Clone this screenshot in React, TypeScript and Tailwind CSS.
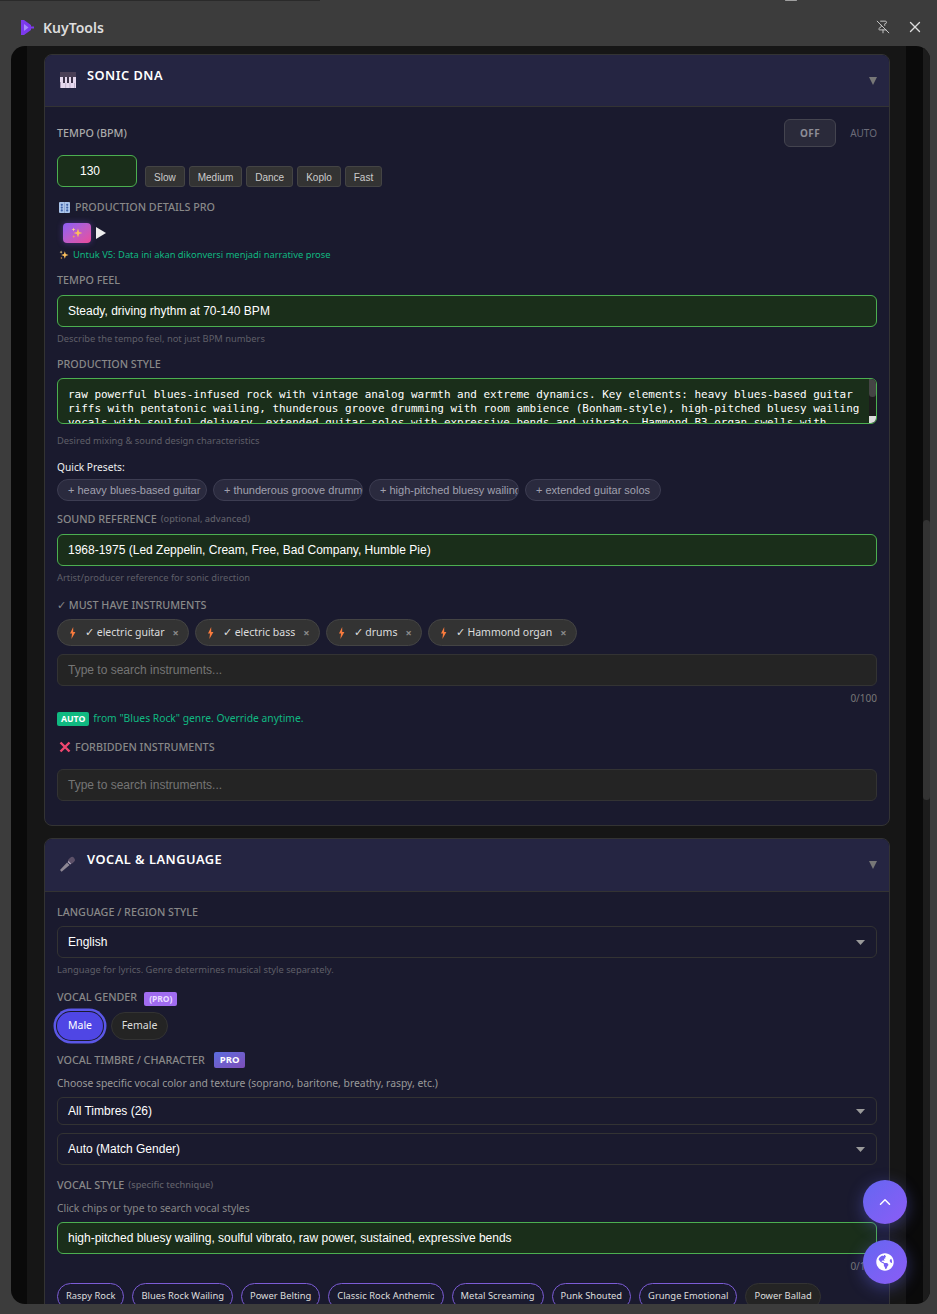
import type { ReactNode } from 'react'
import { PinOff, X, ChevronUp } from 'lucide-react'
import { FaGlobeAmericas } from 'react-icons/fa'

const presets = ['Slow', 'Medium', 'Dance', 'Koplo', 'Fast']
const quickPresets = [
  '+ heavy blues-based guitar',
  '+ thunderous groove drumming',
  '+ high-pitched bluesy wailing',
  '+ extended guitar solos',
]
const instruments = ['✓ electric guitar', '✓ electric bass', '✓ drums', '✓ Hammond organ']
const vocalStyles = [
  { name: 'Raspy Rock', on: true },
  { name: 'Blues Rock Wailing', on: true },
  { name: 'Power Belting', on: true },
  { name: 'Classic Rock Anthemic', on: true },
  { name: 'Metal Screaming', on: true },
  { name: 'Punk Shouted', on: true },
  { name: 'Grunge Emotional', on: true },
  { name: 'Power Ballad', on: false },
]

const productionStyle =
  'raw powerful blues-infused rock with vintage analog warmth and extreme dynamics. Key elements: heavy blues-based guitar riffs with pentatonic wailing, thunderous groove drumming with room ambience (Bonham-style), high-pitched bluesy wailing vocals with soulful delivery, extended guitar solos with expressive bends and vibrato, Hammond B3 organ swells with'

function Label({ children, className = '' }: { children: ReactNode; className?: string }) {
  return (
    <div className={`flex h-4 items-center text-[10.75px] font-medium uppercase text-[#888] ${className}`}>
      {children}
    </div>
  )
}

function Help({ children, className = '' }: { children: ReactNode; className?: string }) {
  return <div className={`mt-[5px] h-[14px] text-[9.35px] leading-[14px] text-[#5f5f68] ${className}`}>{children}</div>
}

function FilledInput({ value, className = '' }: { value: string; className?: string }) {
  return (
    <div
      className={`flex h-8 items-center rounded-md border border-[#4caf50] bg-[#1a2e1a] px-[10px] font-['Liberation_Sans',sans-serif] text-[12px] text-white ${className}`}
    >
      {value}
    </div>
  )
}

function SearchInput({ className = '' }: { className?: string }) {
  return (
    <div
      className={`flex h-8 items-center rounded-md border border-[#333] bg-[#242424] px-[10px] font-['Liberation_Sans',sans-serif] text-[12px] text-[#757575] ${className}`}
    >
      Type to search instruments...
    </div>
  )
}

function SelectBox({ value, className = '' }: { value: string; className?: string }) {
  return (
    <div
      className={`flex items-center justify-between rounded-md border border-[#333] bg-[#1a1a2e] pl-[10px] pr-[11px] font-['Liberation_Sans',sans-serif] text-[12px] text-white ${className}`}
    >
      {value}
      <svg width="9" height="5" viewBox="0 0 9 5">
        <path d="M0 0h9L4.5 5z" fill="#9a9a9a" />
      </svg>
    </div>
  )
}

function PanelHeader({ icon, title, className = '' }: { icon: ReactNode; title: string; className?: string }) {
  return (
    <div className={`flex items-start border-b border-[#333] bg-[#252542] ${className}`}>
      <div className="ml-[15px] mt-[17px] h-4 w-4">{icon}</div>
      <div className="ml-[11px] mt-[11px] text-[12.8px] font-semibold leading-[18px] tracking-[0.5px] text-white">{title}</div>
      <svg className="ml-auto mr-3 mt-[22px]" width="8" height="8" viewBox="0 0 8 8">
        <path d="M0 0h8L4 8z" fill="#777" />
      </svg>
    </div>
  )
}

function Panel({ children, className = '' }: { children: ReactNode; className?: string }) {
  return <div className={`overflow-hidden rounded-lg border border-[#333] bg-[#1a1a2e] ${className}`}>{children}</div>
}

function PianoIcon() {
  return (
    <svg width="16" height="16" viewBox="0 0 16 16">
      <rect y="0" width="16" height="5" fill="#4a3f56" />
      <rect y="5" width="16" height="11" fill="#e6d8ee" />
      <path d="M3 5h2v6H3zM7 5h2v6H7zM11 5h2v6h-2z" fill="#3b3247" />
      <path d="M0 10h1v6H0zM5.5 11h.6v5h-.6zM9.7 11h.6v5h-.6zM14 11h.6v5H14z" fill="#a99ab6" />
    </svg>
  )
}

function MicIcon() {
  return (
    <svg width="16" height="16" viewBox="0 0 16 16">
      <path d="M0 14l1.6 1.8L9.6 9 7 6.4z" fill="#8d8794" />
      <rect x="8" y="1.6" width="7" height="5.6" rx="2.4" transform="rotate(-40 11.5 4.4)" fill="#5c5068" />
      <path d="M7.6 6l2.6 2.6 1-.9L8.5 5z" fill="#b3aabd" />
    </svg>
  )
}

function KnobsIcon() {
  return (
    <svg width="11" height="11" viewBox="0 0 11 11">
      <rect width="11" height="11" rx="1" fill="#a9c4ea" />
      <path d="M5.2 0h.6v11h-.6z" fill="#7e93c0" />
      <circle cx="2.8" cy="2.8" r="1.1" fill="#3f62a8" />
      <circle cx="8.2" cy="2.8" r="1.1" fill="#3f62a8" />
      <circle cx="2.8" cy="5.6" r="1.1" fill="#3f62a8" />
      <circle cx="8.2" cy="5.6" r="1.1" fill="#3f62a8" />
      <circle cx="2.8" cy="8.4" r="1.1" fill="#3f62a8" />
      <circle cx="8.2" cy="8.4" r="1.1" fill="#3f62a8" />
    </svg>
  )
}

function SparkleIcon({ size = 11 }: { size?: number }) {
  return (
    <svg width={size} height={size} viewBox="0 0 12 12">
      <path d="M7 1.5l1.1 3.4L11.5 6 8.1 7.1 7 10.5 5.9 7.1 2.5 6l3.4-1.1z" fill="#fbbf5c" />
      <path d="M2.5 0.5l.5 1.5 1.5.5-1.5.5-.5 1.5-.5-1.5L.5 2.5 2 2z" fill="#fcd98a" />
      <path d="M2.8 8l.4 1.2 1.2.4-1.2.4-.4 1.2-.4-1.2-1.2-.4 1.2-.4z" fill="#f6a94b" />
    </svg>
  )
}

function BoltIcon() {
  return (
    <svg width="7" height="12" viewBox="0 0 7 12">
      <path d="M4.2 0L1 6.4h2L2.4 12 6.4 5H4.2z" fill="#f97b3d" />
    </svg>
  )
}

function RedCross() {
  return (
    <svg width="12" height="12" viewBox="0 0 12 12">
      <path d="M1.5 1.5l9 9M10.5 1.5l-9 9" stroke="#f0476f" strokeWidth="2.4" />
    </svg>
  )
}

function LogoIcon() {
  return (
    <svg width="13" height="15" viewBox="0 0 13 15">
      <path d="M0 0h3l7 5v1.5h3v2h-3V10l-7 5H0z" fill="#7c3aed" />
      <path d="M3 4l4.5 3.5L3 11z" fill="#a78bfa" />
    </svg>
  )
}

function SonicDna() {
  return (
    <Panel>
      <PanelHeader className="h-[52px]" icon={<PianoIcon />} title="SONIC DNA" />
      <div className="px-3 pb-6 pt-3">
        <div className="flex h-7 items-center">
          <Label className="text-[#aaa]">Tempo (BPM)</Label>
          <div className="ml-auto flex h-7 w-[52px] items-center justify-center rounded-md border border-[#44444f] bg-[#2a2a3a] text-[10px] font-bold tracking-[0.5px] text-[#8d8d96]">
            OFF
          </div>
          <span className="ml-[14px] text-[10px] text-[#6b6b78]">AUTO</span>
        </div>

        <div className="mt-2 flex h-8 items-end">
          <div className="flex h-8 w-20 items-center rounded-md border border-[#4caf50] bg-[#1a2e1a] pl-[22px] font-['Liberation_Sans',sans-serif] text-[12px] text-white">
            130
          </div>
          <div className="ml-2 flex gap-1 font-['Liberation_Sans',sans-serif]">
            {presets.map((p) => (
              <div
                key={p}
                className="flex h-[21px] items-center rounded-[3px] border border-[#444] bg-[#333] px-2 pt-px text-[10px] text-[#ccc]"
              >
                {p}
              </div>
            ))}
          </div>
        </div>

        <Label className="mt-3 gap-[5px] pl-[2px] text-[#6f6f78]">
          <KnobsIcon />
          Production Details Pro
        </Label>

        <div className="mt-2 flex h-5 items-center pl-[6px]">
          <div className="flex h-5 w-7 items-center justify-center rounded-[4px] bg-gradient-to-br from-[#8b5cf6] to-[#ec4899] shadow-[0_0_6px_rgba(139,92,246,0.4)]">
            <SparkleIcon size={12} />
          </div>
          <svg className="ml-[5px]" width="10" height="12" viewBox="0 0 10 12">
            <path d="M0 0l10 6-10 6z" fill="#eee" />
          </svg>
        </div>

        <div className="mt-[5px] flex h-[14px] items-center gap-[4px] pl-[2px] text-[9.35px] text-[#10b981]">
          <SparkleIcon size={10} />
          Untuk V5: Data ini akan dikonversi menjadi narrative prose
        </div>

        <Label className="mt-[10px]">Tempo Feel</Label>
        <FilledInput className="mt-[7px]" value="Steady, driving rhythm at 70-140 BPM" />
        <Help>Describe the tempo feel, not just BPM numbers</Help>

        <Label className="mt-[10px]">Production Style</Label>
        <div className="mt-[6px] flex h-[46px] overflow-hidden rounded-md border border-[#4caf50] bg-[#1a2e1a]">
          <div className="w-[805px] pl-[10px] pt-[9px] font-['DejaVu_Sans_Mono',monospace] text-[10.96px] leading-[14px] text-white">
            {productionStyle}
          </div>
          <div className="ml-auto flex w-[7px] flex-col bg-[#1c1c1c]">
            <div className="h-[18px] rounded-b-sm bg-[#444]" />
            <div className="mt-auto h-[7px] w-[7px] bg-[#ddd]" />
          </div>
        </div>
        <Help className="mt-[10px]">Desired mixing &amp; sound design characteristics</Help>

        <div className="mt-3 h-[14px] text-[10.2px] leading-[14px] text-[#eee]">Quick Presets:</div>
        <div className="mt-[5px] flex gap-[6px] font-['Liberation_Sans',sans-serif]">
          {quickPresets.map((chip) => (
            <div
              key={chip}
              className="flex h-[22px] max-w-[150px] items-center overflow-hidden whitespace-nowrap rounded-full border border-[#3d3d52] bg-[#2a2a3e] pl-[10px] pr-[10px] text-[11px] text-[#a0a0ae]"
            >
              {chip}
            </div>
          ))}
        </div>

        <Label className="mt-[10px] gap-1">
          Sound Reference <span className="text-[9.2px] normal-case text-[#5f5f68]">(optional, advanced)</span>
        </Label>
        <FilledInput className="mt-[7px]" value="1968-1975 (Led Zeppelin, Cream, Free, Bad Company, Humble Pie)" />
        <Help>Artist/producer reference for sonic direction</Help>

        <Label className="mt-3">✓ Must Have Instruments</Label>
        <div className="mt-[6px] flex gap-[6px]">
          {instruments.map((name) => (
            <div
              key={name}
              className="flex h-[27px] items-center rounded-full border border-[#444] bg-[#333] pl-[11px] pr-[9px] text-[10.5px] text-[#ddd]"
            >
              <BoltIcon />
              <span className="ml-[9px]">{name}</span>
              <span className="ml-2 text-[11px] font-bold leading-none text-[#888]">×</span>
            </div>
          ))}
        </div>
        <SearchInput className="mt-2" />
        <div className="mt-[5px] h-[14px] text-right text-[10px] leading-[14px] text-[#777]">0/100</div>
        <div className="mt-[6px] flex h-[14px] items-center gap-1 pt-px text-[10.3px] text-[#10b981]">
          <span className="rounded-[2px] bg-[#10b981] px-[4px] text-[8.7px] font-bold leading-[14px] text-white">AUTO</span>
          from "Blues Rock" genre. Override anytime.
        </div>

        <Label className="mt-[14px] gap-[4px] pl-[2px]">
          <RedCross />
          Forbidden Instruments
        </Label>
        <SearchInput className="mt-[14px]" />
      </div>
    </Panel>
  )
}

function VocalLanguage() {
  return (
    <Panel className="mt-3">
      <PanelHeader className="h-[53px]" icon={<MicIcon />} title="VOCAL & LANGUAGE" />
      <div className="px-3 pb-6 pt-3">
        <Label>Language / Region Style</Label>
        <SelectBox className="mt-[6px] h-8" value="English" />
        <Help>Language for lyrics. Genre determines musical style separately.</Help>

        <div className="mt-3 flex h-4 items-center gap-[7px]">
          <Label>Vocal Gender</Label>
          <span className="mt-[3px] rounded-[2px] bg-[#a06cf0] px-[5px] text-[8.5px] font-bold leading-[14px] text-[#e9dcff]">
            (PRO)
          </span>
        </div>
        <div className="mt-[7px] flex h-7 gap-2">
          <div className="flex h-7 w-[46px] items-center justify-center rounded-full bg-[#4f46e5] text-[10.5px] text-white shadow-[0_0_0_1px_#1a1a2e,0_0_0_3.5px_#5b57e8]">
            Male
          </div>
          <div className="flex h-7 w-[57px] items-center justify-center rounded-full border border-[#333] bg-[#242424] text-[10.5px] text-[#ddd]">
            Female
          </div>
        </div>

        <div className="mt-3 flex h-4 items-center gap-[9px]">
          <Label>Vocal Timbre / Character</Label>
          <span className="rounded-[2px] bg-gradient-to-br from-[#5b6ee0] to-[#7c4db8] px-[6px] text-[9.5px] font-bold leading-4 text-white">
            PRO
          </span>
        </div>
        <div className="mt-2 h-[14px] text-[10.35px] leading-[14px] text-[#999]">
          Choose specific vocal color and texture (soprano, baritone, breathy, raspy, etc.)
        </div>
        <SelectBox className="mt-[7px] h-7" value="All Timbres (26)" />
        <SelectBox className="mt-2 h-8" value="Auto (Match Gender)" />

        <Label className="mt-3 gap-1">
          Vocal Style <span className="text-[9.2px] normal-case text-[#5f5f68]">(specific technique)</span>
        </Label>
        <div className="mt-2 h-[14px] text-[10.35px] leading-[14px] text-[#888]">Click chips or type to search vocal styles</div>
        <FilledInput
          className="mt-[7px]"
          value="high-pitched bluesy wailing, soulful vibrato, raw power, sustained, expressive bends"
        />
        <div className="mt-[5px] h-[14px] text-right text-[10px] leading-[14px] text-[#777]">0/100</div>
        <div className="mt-[10px] flex gap-2">
          {vocalStyles.map((s) => (
            <div
              key={s.name}
              className={`flex h-[27px] items-center whitespace-nowrap rounded-full border px-2 text-[9.4px] text-[#ddd] ${
                s.on ? 'border-[#7c5cd6] bg-[#1a1a2e]' : 'border-[#333] bg-[#242424]'
              }`}
            >
              {s.name}
            </div>
          ))}
        </div>
      </div>
    </Panel>
  )
}

export default function App() {
  return (
    <div className="relative flex h-[1314px] w-[937px] flex-col overflow-hidden bg-[#3c3c3c] font-['Noto_Sans',sans-serif]">
      {/* bits of the window behind */}
      <div className="absolute left-0 top-0 h-px w-[320px] bg-[#2a2a2a]" />
      <div className="absolute left-[785px] top-0 h-px w-3 rounded-full bg-[#a0a0a0]" />

      {/* title bar */}
      <div className="flex h-[46px] shrink-0 items-center pl-[21px] pr-[13px] pt-2">
        <LogoIcon />
        <span className="ml-[9px] text-[14px] font-semibold text-[#ddd]">KuyTools</span>
        <PinOff className="ml-auto text-[#ccc]" size={14} strokeWidth={1.6} />
        <X className="ml-4 text-[#ddd]" size={18} strokeWidth={1.8} />
      </div>

      <div className="mb-[10px] ml-[11px] mr-[7px] flex min-h-0 flex-1 overflow-hidden rounded-[14px] bg-[#0a0a0a]">
        <div className="ml-4 min-w-0 w-[879px] shrink-0 overflow-hidden bg-[#161616] pl-[17px] pr-4 pt-2">
          <SonicDna />
          <VocalLanguage />
        </div>
        <div className="ml-auto w-[7px] bg-[#1c1c1c] pt-[474px]">
          <div className="h-[280px] rounded-full bg-[#333]" />
        </div>
      </div>

      {/* floating buttons */}
      <div className="absolute left-[863px] top-[1180px] flex flex-col gap-4">
        <div className="flex h-11 w-11 items-center justify-center rounded-full bg-gradient-to-br from-[#6366f1] to-[#8b5cf6] text-white shadow-[0_4px_16px_rgba(99,102,241,0.4)]">
          <ChevronUp size={18} strokeWidth={2} />
        </div>
        <div className="flex h-11 w-11 items-center justify-center rounded-full bg-gradient-to-br from-[#6366f1] to-[#8b5cf6] text-white shadow-[0_4px_16px_rgba(99,102,241,0.4)]">
          <FaGlobeAmericas size={18} />
        </div>
      </div>
    </div>
  )
}
